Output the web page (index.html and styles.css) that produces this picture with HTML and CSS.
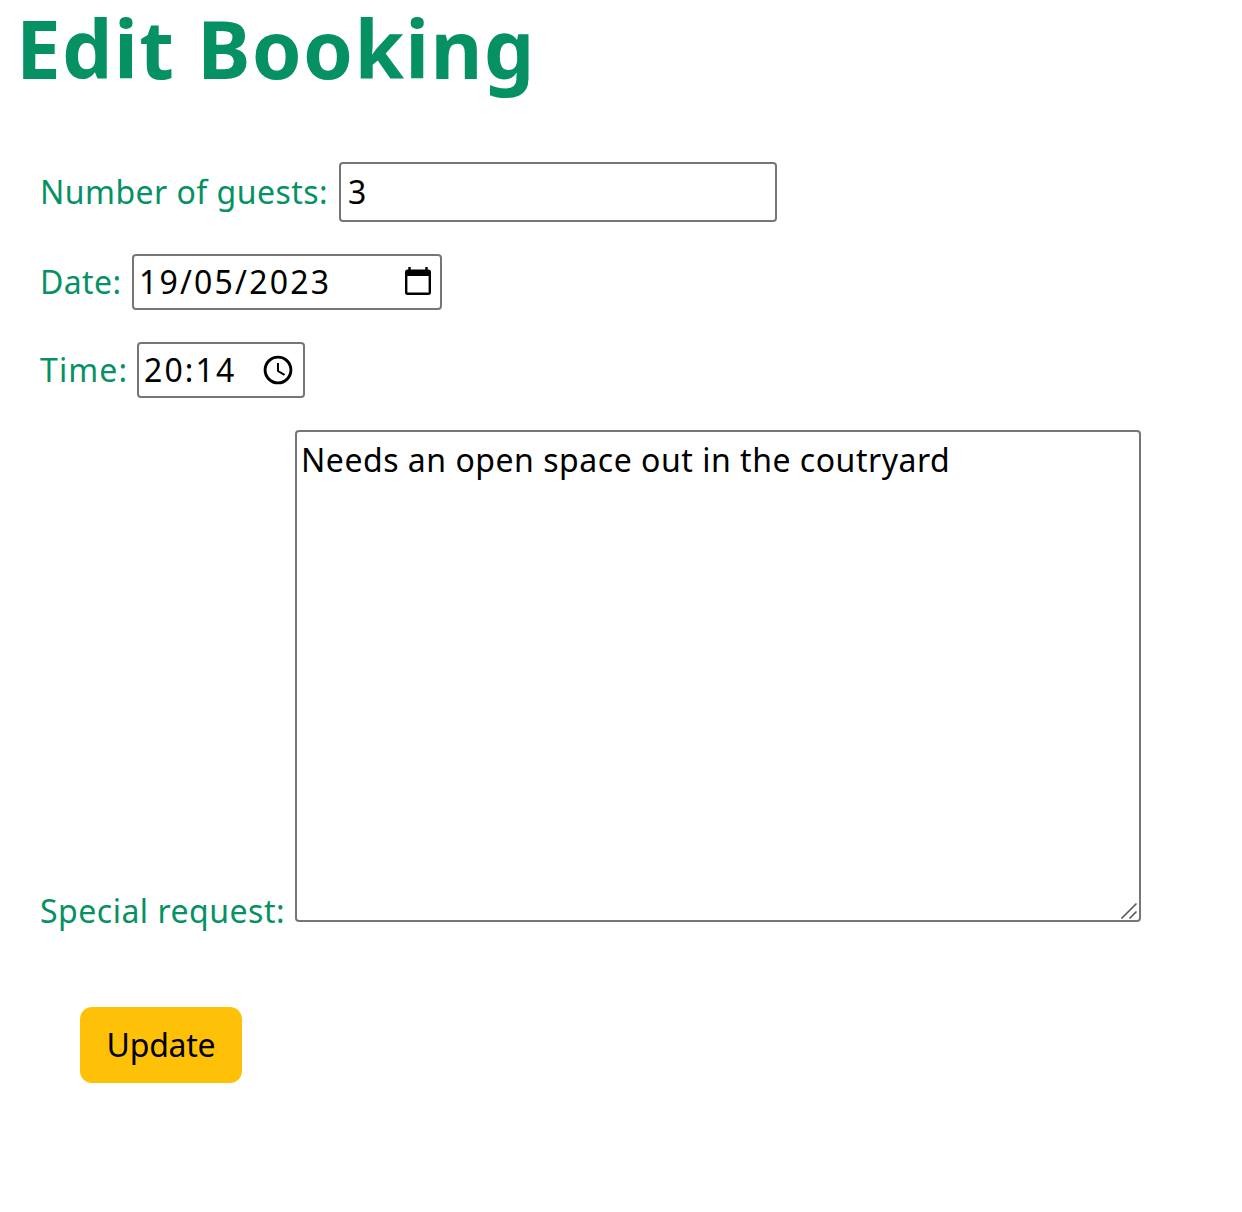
FILE: index.html
```
<!DOCTYPE html>
<html lang="en">
<head>
<meta charset="utf-8">
<title>Edit Booking</title>
<link rel="stylesheet" href="styles.css">
</head>
<body>
<h1 class="title">Edit Booking</h1>
<form class="form">
  <div class="row row-guests">
    <label class="label label-guests" for="guests">Number of guests:</label>
    <input class="control guests" id="guests" type="text" value="3">
  </div>
  <div class="row row-short">
    <label class="label label-date" for="date">Date:</label>
    <div class="control picker date">
      <input class="value" id="date" type="text" value="19/05/2023">
      <svg class="icon" viewBox="0 0 32 32" aria-hidden="true"><path fill-rule="evenodd" d="M6.300 1h2.400v2.400h14.600V1h2.400v2.400h.6a2.700 2.700 0 0 1 2.700 2.700v20.200a2.600 2.600 0 0 1-2.600 2.600H5.600A2.600 2.600 0 0 1 3 26.300V6.100a2.700 2.700 0 0 1 2.700-2.700h.6zM5.400 10v16.500h21.200V10z"/></svg>
    </div>
  </div>
  <div class="row row-short">
    <label class="label label-time" for="time">Time:</label>
    <div class="control picker time">
      <input class="value" id="time" type="text" value="20:14">
      <svg class="icon" viewBox="0 0 32 32" aria-hidden="true"><g fill="none" stroke="#000"><circle cx="16" cy="16" r="12.900" stroke-width="2.900"/><path stroke-width="2" d="M16 9v8l6.500 3.900"/></g></svg>
    </div>
  </div>
  <div class="row row-request">
    <label class="label label-request" for="request">Special request:</label>
    <div class="area">
      <textarea class="control request" id="request">Needs an open space out in the coutryard</textarea>
      <svg class="grip" viewBox="0 0 18 18" aria-hidden="true"><path d="M1.500 16.500l15-15M9.500 16.500l7-7" fill="none" stroke="#555" stroke-width="1.600"/></svg>
    </div>
  </div>
  <button class="update" type="button">Update</button>
</form>
</body>
</html>
```
FILE: styles.css
```
* { box-sizing: border-box; }

body {
  margin: 0;
  background: #fff;
  color: #000;
  font: 32px/44px "Noto Sans", "Open Sans", sans-serif;
}

.title {
  margin: 0;
  padding-left: 16px;
  color: #069164;
  font-size: 80px;
  line-height: 96px;
  letter-spacing: 1.3px;
}

.form {
  display: flex;
  flex-direction: column;
  gap: 32px;
  padding: 66px 40px 0 39px;
}

.row { display: flex; align-items: center; }
.row-guests { height: 60px; }
.row-short { height: 56px; }
.row-request { height: 492px; align-items: flex-end; }

.label {
  flex: none;
  padding: 0 0 1px 1px;
  color: #069164;
  white-space: nowrap;
}
.label-guests { width: 300px; letter-spacing: 0.46px; }
.label-date { width: 93px; letter-spacing: 0.4px; }
.label-time { width: 98px; letter-spacing: 1.1px; }
.label-request {
  width: 256px;
  padding-bottom: 0;
  margin-bottom: -11px;
  letter-spacing: 0.5px;
}

.control {
  border: 2px solid #767676;
  border-radius: 4px;
  background: #fff;
  color: #000;
  font: inherit;
  outline: 0;
}

.guests { width: 438px; height: 60px; padding: 0 7px 1px; }

.picker { display: flex; align-items: center; height: 56px; }
.date { width: 310px; padding: 0 6px 0 5px; letter-spacing: 2.2px; }
.time { width: 168px; padding: 0 9px 0 5px; letter-spacing: 2.13px; }

.value {
  flex: 1;
  min-width: 0;
  height: 52px;
  padding: 0 0 1px;
  border: 0;
  background: none;
  color: inherit;
  font: inherit;
  letter-spacing: inherit;
  outline: 0;
}

.icon { flex: none; width: 32px; height: 32px; }

.area { position: relative; width: 846px; height: 492px; }

.request {
  display: block;
  width: 100%;
  height: 100%;
  padding: 6px 4px;
  letter-spacing: 0.52px;
  resize: none;
}

.grip {
  position: absolute;
  right: 3px;
  bottom: 2px;
  width: 18px;
  height: 18px;
}

.update {
  width: 162px;
  height: 76px;
  margin: 53px 0 0 41px;
  padding: 0 0 1px;
  border: 0;
  border-radius: 12px;
  background: #ffc107;
  color: #000;
  font: inherit;
  letter-spacing: -0.25px;
}
```
